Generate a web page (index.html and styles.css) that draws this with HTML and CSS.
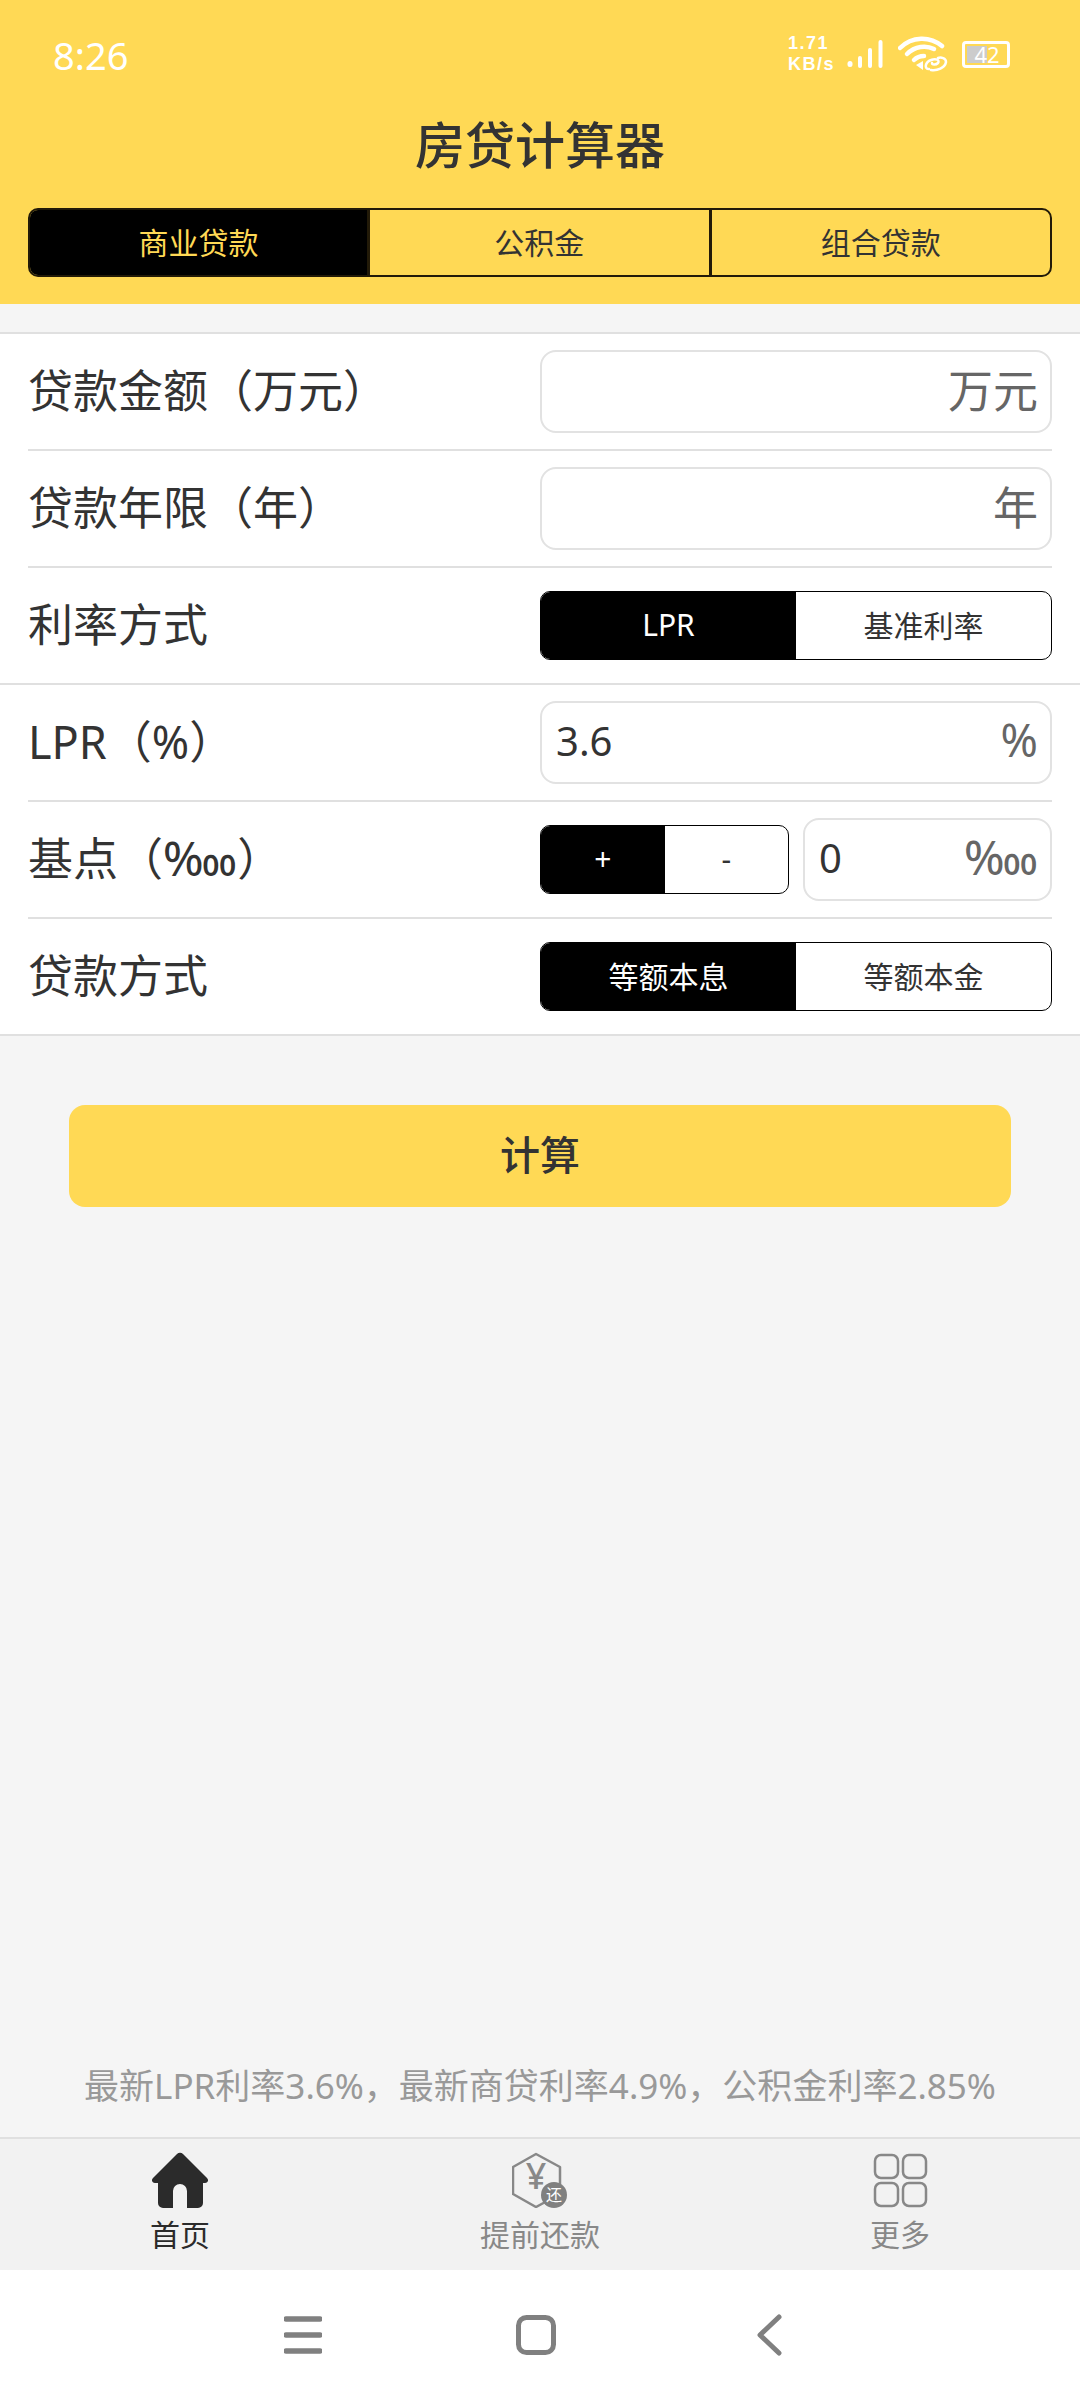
FILE: index.html
```html
<!DOCTYPE html>
<html lang="zh-CN">
<head>
  <meta charset="UTF-8" />
  <meta name="viewport" content="width=device-width, initial-scale=1.0"/>
  <title>房贷计算器</title>
  <link rel="stylesheet" href="styles.css">
</head>
<body>
  <header class="top">
    <div class="status">
      <span class="clock">8:26</span>
      <div class="status-icons">
        <span class="speed">1.71<br>KB/s</span>
        <svg class="signal" width="37" height="28" viewBox="0 0 37 28">
          <g fill="none" stroke="#fff" stroke-linecap="round">
            <path d="M3 23.500v1" stroke-width="5"/>
            <path d="M13 18v8" stroke-width="4"/>
            <path d="M23 10v16" stroke-width="4"/>
            <path d="M33.500 2v24" stroke-width="4"/>
          </g>
        </svg>
        <svg class="wifi" width="50" height="36" viewBox="0 0 50 36">
          <g fill="none" stroke="#fff" stroke-width="4.500" stroke-linecap="round">
            <path d="M2 12C14 0 32 0 44 10"/>
            <path d="M9 18C17 10 28 9 36 13"/>
            <path d="M16 24C19 21 23 20 26 20"/>
          </g>
          <path d="M18 29l7-4v9z" fill="#fff"/>
          <g fill="none" stroke="#fff" stroke-width="2.500" stroke-linecap="round">
            <path d="M31 33c-5 0-4-7 2-9 5-2 9 0 7 3-2 2-6 2-6 0"/>
            <path d="M33 34c6 1 14-2 15-8 0-4-5-5-8-4"/>
          </g>
        </svg>
        <div class="battery"><span class="battery-level">4</span><span class="battery-rest">2</span></div>
      </div>
    </div>
    <h1 class="title">房贷计算器</h1>
    <div class="seg seg-tabs">
      <button class="seg-btn active">商业贷款</button>
      <button class="seg-btn">公积金</button>
      <button class="seg-btn">组合贷款</button>
    </div>
  </header>

  <main class="content">
    <section class="form">
      <div class="row">
        <label class="row-label">贷款金额（万元）</label>
        <div class="field"><input class="field-input" type="text"><span class="unit">万元</span></div>
      </div>
      <div class="row">
        <label class="row-label">贷款年限（年）</label>
        <div class="field"><input class="field-input" type="text"><span class="unit">年</span></div>
      </div>
      <div class="row row-wide">
        <label class="row-label">利率方式</label>
        <div class="seg seg-form">
          <button class="seg-btn active">LPR</button>
          <button class="seg-btn">基准利率</button>
        </div>
      </div>
      <div class="row">
        <label class="row-label">LPR（%）</label>
        <div class="field"><input class="field-input" type="text" value="3.6"><span class="unit">%</span></div>
      </div>
      <div class="row">
        <label class="row-label">基点（<span class="permyriad">‱</span>）</label>
        <div class="bp">
          <div class="seg seg-form seg-bp">
            <button class="seg-btn active">+</button>
            <button class="seg-btn">-</button>
          </div>
          <div class="field field-bp"><input class="field-input" type="text" value="0"><span class="unit permyriad">‱</span></div>
        </div>
      </div>
      <div class="row row-wide">
        <label class="row-label">贷款方式</label>
        <div class="seg seg-form">
          <button class="seg-btn active">等额本息</button>
          <button class="seg-btn">等额本金</button>
        </div>
      </div>
    </section>

    <button class="calc">计算</button>

    <p class="note">最新LPR利率3.6%，最新商贷利率4.9%，公积金利率2.85%</p>
  </main>

  <nav class="tabbar">
    <a class="tab current">
      <svg width="56" height="56" viewBox="0 0 56 56">
        <path d="M25 2a4 4 0 0 1 6 0l24 24c2 2 1 5-2 5h-2v20a5 5 0 0 1-5 5H35V39a7 7 0 0 0-14 0v17H11a5 5 0 0 1-5-5V31H3c-3 0-4-3-2-5z" fill="#2b2b2b"/>
      </svg>
      <span>首页</span>
    </a>
    <a class="tab">
      <svg width="56" height="56" viewBox="0 0 56 56">
        <path d="M24 2L48 15V42L24 55L1 42V15z" fill="none" stroke="#888" stroke-width="2.500" stroke-linejoin="round"/>
        <text class="icon-yen" x="24" y="37" text-anchor="middle">¥</text>
        <circle cx="42" cy="43" r="13" fill="#808080"/>
        <text class="icon-huan" x="42" y="49" text-anchor="middle">还</text>
      </svg>
      <span>提前还款</span>
    </a>
    <a class="tab">
      <svg width="56" height="56" viewBox="0 0 56 56">
        <g fill="none" stroke="#888" stroke-width="2.500">
          <rect x="3" y="3" width="23" height="23" rx="6"/>
          <rect x="31" y="3" width="23" height="23" rx="6"/>
          <rect x="3" y="31" width="23" height="23" rx="6"/>
          <rect x="31" y="31" width="23" height="23" rx="6"/>
        </g>
      </svg>
      <span>更多</span>
    </a>
  </nav>

  <div class="sysnav">
    <svg width="38" height="38" viewBox="0 0 38 38">
      <path d="M2 3h34M2 19h34M2 35h34" stroke="#808080" stroke-width="5.500" stroke-linecap="round"/>
    </svg>
    <svg width="40" height="40" viewBox="0 0 40 40">
      <rect x="2.500" y="2.500" width="35" height="35" rx="8" fill="none" stroke="#808080" stroke-width="5"/>
    </svg>
    <svg width="26" height="42" viewBox="0 0 26 42">
      <path d="M23 3L4 21l19 18" fill="none" stroke="#808080" stroke-width="5" stroke-linecap="round" stroke-linejoin="round"/>
    </svg>
  </div>
</body>
</html>
```

FILE: styles.css
```css
* {
  margin: 0;
  padding: 0;
  box-sizing: border-box;
}

body {
  width: 1080px;
  height: 2400px;
  display: flex;
  flex-direction: column;
  font-family: "Noto Sans", "Noto Sans CJK SC", sans-serif;
  background-color: #f5f5f5;
  color: #333;
  overflow: hidden;
}

button {
  font-family: inherit;
  border: none;
  background: none;
  color: inherit;
}

/* top yellow part */
.top {
  height: 304px;
  background-color: #ffd955;
  padding: 0 28px;
}

.status {
  height: 108px;
  padding: 32px 42px 0 25px;
  display: flex;
  justify-content: space-between;
  align-items: flex-start;
  color: #fff;
}

.clock {
  font-size: 38px;
  line-height: 46px;
}

.status-icons {
  display: flex;
  align-items: center;
  height: 44px;
}

.speed {
  width: 59px;
  font-family: "Liberation Sans", sans-serif;
  font-size: 18px;
  font-weight: 700;
  line-height: 21px;
  letter-spacing: 1.500px;
}

.wifi {
  margin-left: 14px;
}

.battery {
  width: 48px;
  height: 27px;
  margin-left: 14px;
  padding: 2px;
  border: 3px solid #fff;
  border-radius: 4px;
  display: flex;
  font-size: 22px;
  line-height: 17px;
}

.battery-level {
  width: 20px;
  text-align: right;
  background-color: #ccc;
}

.title {
  height: 100px;
  font-size: 50px;
  font-weight: 500;
  line-height: 74px;
  text-align: center;
}

/* segmented buttons */
.seg {
  display: flex;
  height: 69px;
  border-radius: 10px;
  overflow: hidden;
}

.seg-btn {
  flex: 1;
  padding-bottom: 3px;
  font-size: 30px;
}

.seg-btn.active {
  background-color: #000;
  color: #fff;
}

.seg-tabs {
  border: 2px solid #221a08;
}

.seg-tabs .seg-btn {
  border-left: 3px solid #221a08;
}

.seg-tabs .seg-btn.active {
  flex: 0 0 337px;
  border-left: none;
  color: #ffd955;
}

.seg-form {
  width: 512px;
  border: 1px solid #000;
  background-color: #fff;
}

.seg-bp {
  width: 249px;
}

/* form */
.content {
  flex: 1;
  display: flex;
  flex-direction: column;
  padding-top: 28px;
}

.form {
  background-color: #fff;
  border-top: 2px solid #e0e0e0;
  border-bottom: 2px solid #e0e0e0;
}

.row {
  height: 117px;
  margin: 0 28px;
  display: flex;
  align-items: center;
  justify-content: space-between;
  border-bottom: 2px solid #e0e0e0;
}

.row:last-child {
  height: 115px;
  border-bottom: none;
}

.row-wide {
  margin: 0;
  padding: 0 28px;
}

.row-label {
  padding-bottom: 6px;
  font-size: 45px;
}

.field {
  width: 512px;
  height: 83px;
  padding: 0 12px 0 14px;
  display: flex;
  align-items: center;
  border: 2px solid #e2e2e2;
  border-radius: 16px;
}

.field-input {
  flex: 1;
  min-width: 0;
  padding-bottom: 4px;
  border: none;
  outline: none;
  background: none;
  font-family: inherit;
  font-size: 40px;
  color: #333;
}

.unit {
  padding-bottom: 6px;
  font-size: 45px;
  color: #666;
}

.permyriad {
  font-size: 48px;
  line-height: 1;
}

.bp {
  width: 512px;
  display: flex;
  align-items: center;
  justify-content: space-between;
}

.field-bp {
  width: 249px;
}

.calc {
  width: 942px;
  height: 102px;
  margin: 69px auto 0;
  padding-bottom: 6px;
  background-color: #ffd955;
  border-radius: 16px;
  font-size: 40px;
  font-weight: 500;
}

.note {
  margin-top: auto;
  height: 74px;
  font-size: 35px;
  line-height: 46px;
  text-align: center;
  color: #999;
}

/* bottom tabs */
.tabbar {
  height: 133px;
  display: flex;
  background-color: #f2f2f2;
  border-top: 2px solid #e0e0e0;
}

.tab {
  flex: 1;
  padding-top: 13px;
  display: flex;
  flex-direction: column;
  align-items: center;
  font-size: 30px;
  line-height: 40px;
  color: #888;
}

.tab.current {
  color: #2b2b2b;
}

.tab svg {
  display: block;
  margin-bottom: 7px;
}

.icon-yen {
  font-size: 36px;
  font-weight: 500;
  fill: #888;
}

.icon-huan {
  font-size: 16px;
  fill: #fff;
}

.sysnav {
  height: 130px;
  background-color: #fff;
  padding-left: 284px;
  display: flex;
  align-items: center;
  gap: 194px;
}

.sysnav svg:last-child {
  margin-left: 6px;
}
```
